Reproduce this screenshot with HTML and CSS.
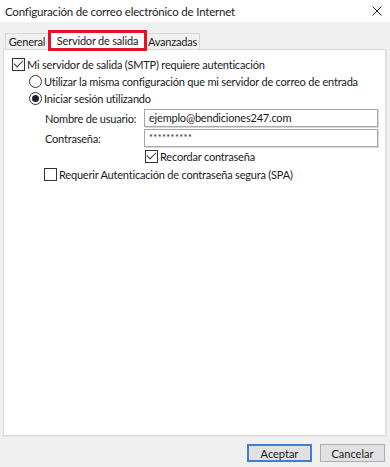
FILE: index.html
```html
<!DOCTYPE html>
<html lang="es">
<head>
    <meta charset="UTF-8">
    <title>Configuración de correo electrónico de Internet</title>
    <link rel="stylesheet" href="styles.css">
</head>
<body>
    <div class="window">
        <div class="titlebar">
            <span class="title">Configuración de correo electrónico de Internet</span>
            <svg class="close" width="10" height="10" viewBox="0 0 10 10">
                <path d="M0.5 0.5 L9.5 9.5 M9.5 0.5 L0.5 9.5" stroke="#222" stroke-width="1" fill="none"/>
            </svg>
        </div>

        <div class="tabs">
            <div class="tab tab-general">General</div>
            <div class="tab active">Servidor de salida</div>
            <div class="tab tab-adv">Avanzadas</div>
        </div>

        <div class="panel">
            <label class="row">
                <span class="check checked"></span>
                Mi servidor de salida (SMTP) requiere autenticación
            </label>
            <label class="row indent">
                <span class="radio"></span>
                Utilizar la misma configuración que mi servidor de correo de entrada
            </label>
            <label class="row indent">
                <span class="radio selected"></span>
                Iniciar sesión utilizando
            </label>

            <div class="form">
                <span class="label">Nombre de usuario:</span>
                <div class="input">ejemplo@bendiciones247.com</div>
                <span class="label">Contraseña:</span>
                <div class="input password">**********</div>
            </div>

            <label class="row remember">
                <span class="check checked"></span>
                Recordar contraseña
            </label>
            <label class="row spa">
                <span class="check"></span>
                Requerir Autenticación de contraseña segura (SPA)
            </label>
        </div>

        <div class="buttons">
            <button class="btn default">Aceptar</button>
            <button class="btn">Cancelar</button>
        </div>
    </div>
</body>
</html>
```

FILE: styles.css
```css
body {
    margin: 0;
    font-family: Lato, "Liberation Sans", sans-serif;
    font-size: 11px;
    letter-spacing: -0.2px;
    color: #1a1a1a;
}

.window {
    width: 390px;
    height: 467px;
    background: #f0f0f0;
    display: flex;
    flex-direction: column;
}

.titlebar {
    height: 22px;
    background: #fff;
    display: flex;
    align-items: center;
    justify-content: space-between;
    padding: 0 8px 0 5px;
}

.title {
    font-size: 11.5px;
    color: #222;
}

.tabs {
    display: flex;
    align-items: flex-end;
    height: 19px;
    margin-top: 8px;
    padding-left: 5px;
}

.tab {
    height: 16px;
    line-height: 15px;
    border: 1px solid #d9d9d9;
    border-bottom: none;
    background: #f0f0f0;
    box-sizing: border-box;
    white-space: nowrap;
    text-align: center;
}

.tab-general {
    width: 44px;
}

.tab-adv {
    width: 54px;
    border-left: none;
}

.tab.active {
    width: 99px;
    height: 21px;
    line-height: 15px;
    margin: 0 -1px -2px -1px;
    background: #fff;
    border: 3px solid #e81123;
    position: relative;
    z-index: 1;
}

.panel {
    margin: 0 4px 0 3px;
    height: 387px;
    background: #fff;
    border: 1px solid #d9d9d9;
    box-shadow: 1px 1px 0 #e5e5e5;
    box-sizing: border-box;
    padding: 6px 8px 0 8px;
}

.row {
    display: flex;
    align-items: center;
    height: 17px;
    gap: 2px;
    white-space: nowrap;
}

.indent {
    padding-left: 17px;
}

.check {
    width: 13px;
    height: 13px;
    box-sizing: border-box;
    border: 1px solid #333;
    background: #fff;
    position: relative;
    flex-shrink: 0;
}

.check.checked::after {
    content: "";
    position: absolute;
    left: 3px;
    top: -1px;
    width: 4px;
    height: 8px;
    border: solid #333;
    border-width: 0 1px 1px 0;
    transform: rotate(45deg);
}

.radio {
    width: 13px;
    height: 13px;
    box-sizing: border-box;
    border: 1px solid #333;
    border-radius: 50%;
    background: #fff;
    position: relative;
    flex-shrink: 0;
}

.radio.selected::after {
    content: "";
    position: absolute;
    left: 2px;
    top: 2px;
    width: 7px;
    height: 7px;
    border-radius: 50%;
    background: #222;
}

.form {
    display: grid;
    grid-template-columns: 99px 234px;
    row-gap: 2px;
    align-items: center;
    margin-top: 2px;
    padding-left: 33px;
}

.label {
    white-space: nowrap;
}

.input {
    height: 18px;
    line-height: 16px;
    box-sizing: border-box;
    border: 1px solid #a8a8a8;
    box-shadow: 1px 1px 0 #dadada;
    padding: 0 4px;
}

.password {
    font-size: 9px;
    letter-spacing: 0.5px;
}

.remember {
    margin-top: 1px;
    padding-left: 133px;
}

.spa {
    margin-top: 1px;
    padding-left: 32px;
}

.buttons {
    display: flex;
    justify-content: flex-end;
    gap: 8px;
    padding: 8px 5px 0 0;
}

.btn {
    width: 65px;
    height: 18px;
    font-family: inherit;
    font-size: 11px;
    color: #1a1a1a;
    background: #e1e1e1;
    border: 1px solid #adadad;
    padding: 0;
}

.btn.default {
    border: 2px solid #3c7fdb;
}
```
